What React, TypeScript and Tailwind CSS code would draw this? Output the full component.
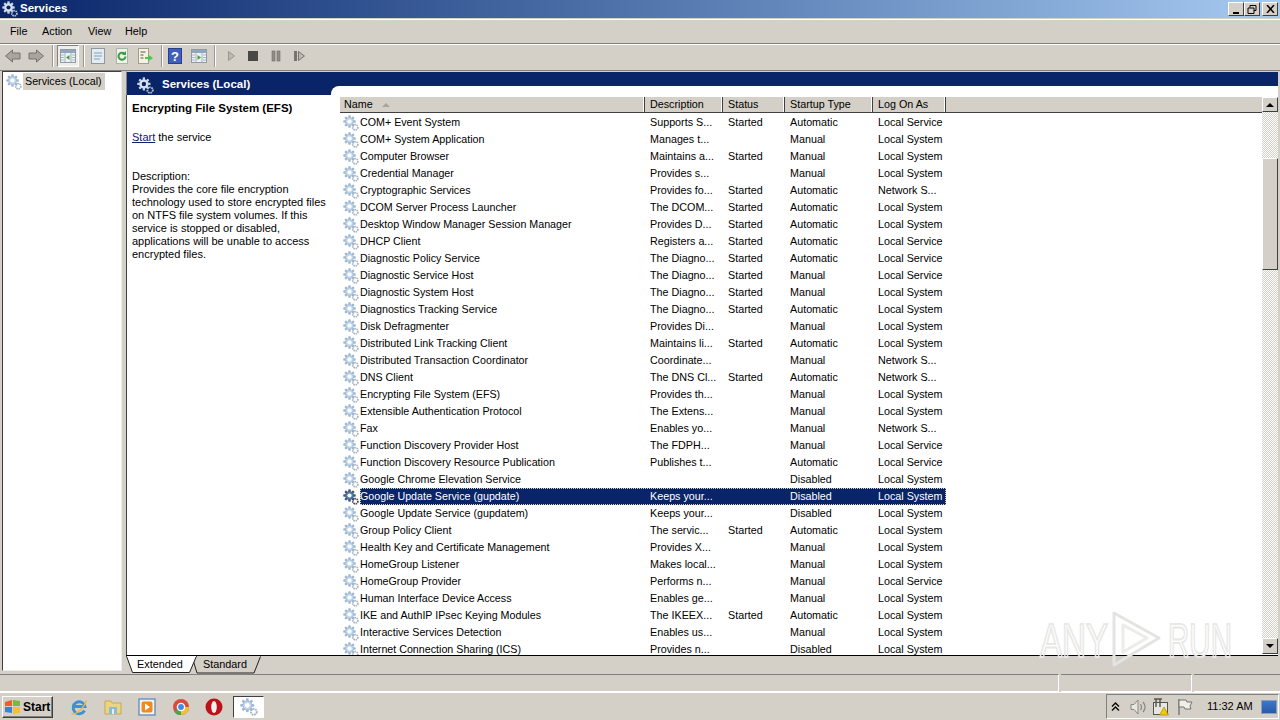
import React from 'react'

const rows: string[][] = [
  ['COM+ Event System', 'Supports S...', 'Started', 'Automatic', 'Local Service'],
  ['COM+ System Application', 'Manages t...', '', 'Manual', 'Local System'],
  ['Computer Browser', 'Maintains a...', 'Started', 'Manual', 'Local System'],
  ['Credential Manager', 'Provides s...', '', 'Manual', 'Local System'],
  ['Cryptographic Services', 'Provides fo...', 'Started', 'Automatic', 'Network S...'],
  ['DCOM Server Process Launcher', 'The DCOM...', 'Started', 'Automatic', 'Local System'],
  ['Desktop Window Manager Session Manager', 'Provides D...', 'Started', 'Automatic', 'Local System'],
  ['DHCP Client', 'Registers a...', 'Started', 'Automatic', 'Local Service'],
  ['Diagnostic Policy Service', 'The Diagno...', 'Started', 'Automatic', 'Local Service'],
  ['Diagnostic Service Host', 'The Diagno...', 'Started', 'Manual', 'Local Service'],
  ['Diagnostic System Host', 'The Diagno...', 'Started', 'Manual', 'Local System'],
  ['Diagnostics Tracking Service', 'The Diagno...', 'Started', 'Automatic', 'Local System'],
  ['Disk Defragmenter', 'Provides Di...', '', 'Manual', 'Local System'],
  ['Distributed Link Tracking Client', 'Maintains li...', 'Started', 'Automatic', 'Local System'],
  ['Distributed Transaction Coordinator', 'Coordinate...', '', 'Manual', 'Network S...'],
  ['DNS Client', 'The DNS Cl...', 'Started', 'Automatic', 'Network S...'],
  ['Encrypting File System (EFS)', 'Provides th...', '', 'Manual', 'Local System'],
  ['Extensible Authentication Protocol', 'The Extens...', '', 'Manual', 'Local System'],
  ['Fax', 'Enables yo...', '', 'Manual', 'Network S...'],
  ['Function Discovery Provider Host', 'The FDPH...', '', 'Manual', 'Local Service'],
  ['Function Discovery Resource Publication', 'Publishes t...', '', 'Automatic', 'Local Service'],
  ['Google Chrome Elevation Service', '', '', 'Disabled', 'Local System'],
  ['Google Update Service (gupdate)', 'Keeps your...', '', 'Disabled', 'Local System'],
  ['Google Update Service (gupdatem)', 'Keeps your...', '', 'Disabled', 'Local System'],
  ['Group Policy Client', 'The servic...', 'Started', 'Automatic', 'Local System'],
  ['Health Key and Certificate Management', 'Provides X...', '', 'Manual', 'Local System'],
  ['HomeGroup Listener', 'Makes local...', '', 'Manual', 'Local System'],
  ['HomeGroup Provider', 'Performs n...', '', 'Manual', 'Local Service'],
  ['Human Interface Device Access', 'Enables ge...', '', 'Manual', 'Local System'],
  ['IKE and AuthIP IPsec Keying Modules', 'The IKEEX...', 'Started', 'Automatic', 'Local System'],
  ['Interactive Services Detection', 'Enables us...', '', 'Manual', 'Local System'],
  ['Internet Connection Sharing (ICS)', 'Provides n...', '', 'Disabled', 'Local System'],
]

const raised = 'border border-t-white border-l-white border-r-[#404040] border-b-[#404040]'
const sunken = 'border border-t-[#808080] border-l-[#808080] border-r-white border-b-white'

function Gear({ size = 16, fill = '#c5d7ea', stroke = '#9db8d4', small = '#a4b2c0', hole = '#ffffff' }: { size?: number; fill?: string; stroke?: string; small?: string; hole?: string }) {
  const teeth = [0, 45, 90, 135, 180, 225, 270, 315]
  return (
    <svg width={size} height={size} viewBox="0 0 16 16" className="shrink-0">
      <g stroke={stroke} strokeWidth="2">
        {teeth.map(a => (
          <line key={a} x1="6.5" y1="0.5" x2="6.5" y2="12.5" transform={`rotate(${a} 6.5 6.5)`} />
        ))}
      </g>
      <circle cx="6.500" cy="6.500" r="4" fill={fill} stroke={stroke} strokeWidth="0.8" />
      <circle cx="6.500" cy="6.500" r="2.100" fill={hole} />
      <circle cx="12.300" cy="12.300" r="2.600" fill="none" stroke={small} strokeWidth="1.700" strokeDasharray="1.500 0.700" />
      <circle cx="12.300" cy="12.300" r="1" fill={hole} />
    </svg>
  )
}

function ToolIcon({ children, className = '' }: { children: React.ReactNode; className?: string }) {
  return (
    <svg width="20" height="20" viewBox="0 0 20 20" className={`shrink-0 ${className}`}>
      {children}
    </svg>
  )
}

function Sep({ className = '' }: { className?: string }) {
  return <div className={`w-[2px] h-[22px] border-l border-l-[#9a968e] border-r border-r-white shrink-0 ${className}`} />
}

function WindowIcon({ accent }: { accent: 'left' | 'right' }) {
  return (
    <ToolIcon>
      <rect x="2.500" y="3.500" width="15" height="13" fill="#eef3f2" stroke="#8f9ca8" />
      <rect x="3" y="4" width="14" height="3" fill="#8ea6c0" />
      <path d="M7 7v9M13 7v9" stroke="#9fb0bf" />
      <path d="M3 9h3M3 11.500h3M3 14h3M14 9h3M14 11.500h3M14 14h3" stroke="#a9b7c4" />
      {accent === 'left' ? (
        <path d="M11.500 9v5L8 11.500z" fill="#4f9a4f" />
      ) : (
        <path d="M8.500 9v5l3.500-2.500z" fill="#4f9a4f" />
      )}
    </ToolIcon>
  )
}

function Toolbar() {
  return (
    <div className="h-[26px] shrink-0 border-t border-t-white flex items-center pl-[3px] pb-[3px]">
      <ToolIcon>
        <path d="M2.500 10l7-6v3h7.500v6H9.500v3z" fill="#a8a59e" stroke="#75726c" />
      </ToolIcon>
      <ToolIcon className="ml-[3px]">
        <path d="M17.500 10l-7-6v3H3v6h7.500v3z" fill="#a8a59e" stroke="#75726c" />
      </ToolIcon>
      <Sep className="ml-[6px]" />
      <div className="ml-[3px] w-[22px] h-[22px] shrink-0 bg-[#efedea] border border-t-[#808080] border-l-[#808080] border-r-white border-b-white flex items-center justify-center">
        <WindowIcon accent="left" />
      </div>
      <Sep className="ml-[4px]" />
      <ToolIcon className="ml-[3px]">
        <rect x="3.500" y="2.500" width="13" height="15" fill="#e4ecf0" stroke="#8b9aa6" />
        <path d="M6 7h8M6 10h8M6 13h6" stroke="#7fa0c0" />
      </ToolIcon>
      <ToolIcon className="ml-[4px]">
        <rect x="4.500" y="2.500" width="11" height="15" fill="#eef4ea" stroke="#aab5a6" />
        <path d="M13.500 10.500a3.500 3.500 0 1 1-1.200-3" fill="none" stroke="#3a9a45" strokeWidth="2" />
        <path d="M14 5v4h-4z" fill="#3a9a45" />
      </ToolIcon>
      <ToolIcon className="ml-[3px]">
        <rect x="3.500" y="2.500" width="10" height="15" fill="#f5f2e4" stroke="#a39f8c" />
        <path d="M5.500 6h5M5.500 9h3M5.500 12h3" stroke="#555550" />
        <path d="M10 11h3V8.500l5 3.500-5 3.500V13h-3z" fill="#56bf52" />
      </ToolIcon>
      <Sep className="ml-[6px]" />
      <ToolIcon className="ml-[2px]">
        <rect x="3.500" y="2.500" width="13" height="15" fill="#3f5fbe" stroke="#283f8c" />
        <text x="10" y="15" textAnchor="middle" fontSize="13" fontWeight="700" fill="#fff" fontFamily="Liberation Sans, sans-serif">?</text>
      </ToolIcon>
      <div className="ml-[4px]"><WindowIcon accent="right" /></div>
      <Sep className="ml-[5px]" />
      <ToolIcon className="ml-[5px]">
        <path d="M7.500 5.500l6 4.500-6 4.500z" fill="#bdb9b1" stroke="#9a968e" />
      </ToolIcon>
      <ToolIcon className="ml-[2px]">
        <rect x="5" y="5" width="10" height="10" fill="#4a4844" />
      </ToolIcon>
      <ToolIcon className="ml-[3px]">
        <rect x="6" y="5" width="3" height="10" fill="#918e87" stroke="#6e6b65" strokeWidth="0.6" />
        <rect x="11" y="5" width="3" height="10" fill="#918e87" stroke="#6e6b65" strokeWidth="0.6" />
      </ToolIcon>
      <ToolIcon className="ml-[3px]">
        <rect x="5" y="5" width="3" height="10" fill="#77746e" />
        <path d="M9.500 5.500l6 4.500-6 4.500z" fill="#bdb9b1" stroke="#77746e" />
      </ToolIcon>
    </div>
  )
}

function Description() {
  return (
    <div className="w-[213px] shrink-0 pl-[5px] pr-[3px] pt-[6px] text-[11px] leading-[13px] text-black whitespace-nowrap">
      <div className="font-bold text-[11.5px] leading-[14px]">Encrypting File System (EFS)</div>
      <div className="mt-[16px]">
        <span className="text-[#0a246a] underline">Start</span> the service
      </div>
      <div className="mt-[26px]">Description:</div>
      <div>
        Provides the core file encryption
        <br />technology used to store encrypted files
        <br />on NTFS file system volumes. If this
        <br />service is stopped or disabled,
        <br />applications will be unable to access
        <br />encrypted files.
      </div>
    </div>
  )
}

function HeaderCell({ label, width, sort }: { label: string; width: string; sort?: boolean }) {
  return (
    <div className={`${width} h-[15px] shrink-0 flex items-center ${sort ? 'pl-[4px]' : 'pl-[5px]'} border-r border-r-[#404040] shadow-[inset_-1px_0_0_#fff]`}>
      {label}
      {sort && <span className="ml-[9px] w-0 h-0 border-l-[4px] border-r-[4px] border-b-[4px] border-l-transparent border-r-transparent border-b-[#a8a49c]" />}
    </div>
  )
}

function ServiceList() {
  return (
    <div className="flex-1 min-w-0 flex flex-col h-full pt-[2px]">
      <div className="h-[16px] shrink-0 flex bg-[#d4d0c8] border-b border-b-[#404040] text-[10.75px] text-black">
        <HeaderCell label="Name" width="w-[305px]" sort />
        <HeaderCell label="Description" width="w-[78px]" />
        <HeaderCell label="Status" width="w-[62px]" />
        <HeaderCell label="Startup Type" width="w-[88px]" />
        <HeaderCell label="Log On As" width="w-[73px]" />
      </div>
      <div className="flex-1 min-h-0 overflow-hidden pt-[1px]">
        {rows.map(r => {
          const selected = r[0] === 'Google Update Service (gupdate)'
          return (
            <div key={r[0]} className="h-[17px] flex items-center text-[10.75px] text-black whitespace-nowrap">
              <div className="w-[20px] shrink-0 pl-[3px]">
                {selected ? <Gear fill="#5b7aa8" stroke="#3c5a88" small="#444444" /> : <Gear />}
              </div>
              <div className={`w-[586px] h-[17px] flex items-center ${selected ? 'bg-[#0a246a] text-white outline-1 -outline-offset-1 outline-dotted outline-[#d4d0c8]' : ''}`}>
                <div className="w-[290px] text-[10.7px]">{r[0]}</div>
                <div className="w-[78px]">{r[1]}</div>
                <div className="w-[62px]">{r[2]}</div>
                <div className="w-[88px]">{r[3]}</div>
                <div className="w-[68px]">{r[4]}</div>
              </div>
            </div>
          )
        })}
      </div>
    </div>
  )
}

function Scrollbar() {
  return (
    <div className="w-[16px] shrink-0 h-full pt-[2px] flex flex-col">
      <div className={`h-[15px] shrink-0 bg-[#d4d0c8] ${raised} flex items-center justify-center`}>
        <span className="w-0 h-0 border-l-[4px] border-r-[4px] border-b-[4px] border-l-transparent border-r-transparent border-b-black" />
      </div>
      <div className="flex-1 min-h-0 flex flex-col bg-[repeating-conic-gradient(#d4d0c8_0_25%,#ffffff_0_50%)] bg-[length:2px_2px]">
        <div className={`h-[112px] mt-[46px] bg-[#d4d0c8] ${raised}`} />
      </div>
      <div className={`h-[16px] shrink-0 mb-[1px] bg-[#d4d0c8] ${raised} flex items-center justify-center`}>
        <span className="w-0 h-0 border-l-[4px] border-r-[4px] border-t-[4px] border-l-transparent border-r-transparent border-t-black" />
      </div>
    </div>
  )
}

function Tabs() {
  return (
    <div className="h-[19px] shrink-0 relative -ml-[1px] bg-[#d4d0c8] border-t border-t-black text-[10.85px] text-black">
      <svg width="140" height="18" viewBox="0 0 140 18" className="absolute left-0 top-0">
        <path d="M66 0.500L71 17H128L134.500 0.500" fill="#d4d0c8" stroke="#222222" />
        <path d="M0.500 0L6.500 16.500H63.500L70.500 0" fill="#ffffff" stroke="#222222" />
        <path d="M1 0H70" stroke="#ffffff" strokeWidth="2" />
      </svg>
      <span className="absolute left-[11px] top-0 leading-[17px]">Extended</span>
      <span className="absolute left-[77px] top-0 leading-[17px]">Standard</span>
    </div>
  )
}

function Watermark() {
  return (
    <div className="absolute left-[1040px] top-[610px] h-[58px] flex items-start pointer-events-none [font-family:'Liberation_Sans',sans-serif] text-[48px] leading-none text-transparent [-webkit-text-stroke:2px_#e8e8e6]">
      <span className="block w-[68px] mt-[7px] scale-x-[0.69] origin-left">ANY</span>
      <svg width="55" height="58" viewBox="0 0 55 58" className="shrink-0">
        <path d="M6 3v52l45-27z" fill="none" stroke="#e4e4e2" strokeWidth="3" strokeLinejoin="round" />
        <path d="M15 15v27l24-14z" fill="none" stroke="#ececea" strokeWidth="3" strokeLinejoin="round" />
      </svg>
      <span className="block w-[64px] ml-[5px] mt-[7px] scale-x-[0.615] origin-left">RUN</span>
    </div>
  )
}

function Taskbar() {
  return (
    <div className="h-[28px] shrink-0 flex items-center relative bg-[#d4d0c8] border-t border-t-white">
      <div className={`ml-[2px] w-[51px] h-[22px] ${raised} shadow-[inset_-1px_-1px_0_#808080] flex items-center pl-[1px] gap-[1px] font-bold text-[12px] text-black`}>
        <svg width="18" height="16" viewBox="0 0 18 16">
          <path d="M1 3l7-2v6H1z" fill="#e8622a" />
          <path d="M9 1l7 1v5H9z" fill="#7cb83a" />
          <path d="M1 8h7v6l-7-1z" fill="#3a82d8" />
          <path d="M9 8h7v6l-7 1z" fill="#f4c02e" />
        </svg>
        Start
      </div>
      {/* quick launch */}
      <svg width="18" height="18" viewBox="0 0 18 18" className="ml-[17px]">
        <path d="M14.500 12.500A6 6 0 1 1 15 8.500H4.500" fill="none" stroke="#3c8fd8" strokeWidth="2.800" />
        <path d="M1.500 15.500c3 2 11-3 15-13" fill="none" stroke="#e8b83a" strokeWidth="1.400" />
      </svg>
      <svg width="18" height="18" viewBox="0 0 18 18" className="ml-[16px]">
        <path d="M1 5V3h6l1 2h9v11H1z" fill="#eed47e" stroke="#c7a94f" />
        <rect x="5" y="9" width="8" height="7" fill="#86bcd8" />
        <rect x="8" y="11" width="2" height="5" fill="#e8eef2" />
      </svg>
      <svg width="18" height="18" viewBox="0 0 18 18" className="ml-[16px]">
        <rect x="1" y="1" width="16" height="16" fill="#f0f4f8" stroke="#6f95c4" strokeWidth="1.500" />
        <rect x="3.500" y="3.500" width="11" height="11" rx="2" fill="#ef8a1e" />
        <path d="M7 5.500l5 3.500-5 3.500z" fill="#ffffff" />
      </svg>
      <svg width="18" height="18" viewBox="0 0 18 18" className="ml-[16px]">
        <circle cx="9" cy="9" r="8" fill="#d94c3d" />
        <path d="M9 9L2 13.500A8 8 0 0 0 9 17z" fill="#4aa552" />
        <path d="M9 9l8 0A8 8 0 0 1 9 17z" fill="#f2c230" />
        <circle cx="9" cy="9" r="3.600" fill="#4a86e8" stroke="#ffffff" strokeWidth="1.400" />
      </svg>
      <svg width="18" height="18" viewBox="0 0 18 18" className="ml-[15px]">
        <circle cx="9" cy="9" r="8.500" fill="#bd1219" />
        <ellipse cx="9" cy="9" rx="2.800" ry="6" fill="#f4f0ee" />
      </svg>
      <div className="ml-[10px] w-[31px] h-[22px] bg-white border border-t-[#404040] border-l-[#404040] border-r-white border-b-white flex items-center justify-center">
        <Gear size={18} />
      </div>
      <div className={`absolute right-[1px] top-[1px] w-[173px] h-[25px] ${sunken} flex items-center text-black`}>
        <svg width="9" height="10" viewBox="0 0 9 10" className="ml-[4px] shrink-0">
          <path d="M1 4.500l3.500-3.500L8 4.500M1 8.500L4.500 5 8 8.500" fill="none" stroke="#111111" strokeWidth="1.500" />
        </svg>
        <svg width="18" height="18" viewBox="0 0 18 18" className="ml-[9px] shrink-0">
          <path d="M2 6.500h3l4-4.500v14l-4-4.500H2z" fill="#e8e6e0" stroke="#8a877f" />
          <path d="M11.500 6c1.300 2 1.300 4 0 6M14 4c2.500 3 2.500 7 0 10" fill="none" stroke="#8a877f" strokeWidth="1.200" />
        </svg>
        <svg width="18" height="18" viewBox="0 0 18 18" className="ml-[5px] shrink-0">
          <rect x="1.500" y="4.500" width="14" height="12" fill="#e8e6e0" stroke="#555550" />
          <path d="M4 1v8M8 1v8M2 1h8" fill="none" stroke="#555550" strokeWidth="1.400" />
          <path d="M12 9l4.500 8h-9z" fill="#f4c800" stroke="#8a7000" strokeWidth="0.500" />
        </svg>
        <svg width="18" height="18" viewBox="0 0 18 18" className="ml-[6px] shrink-0">
          <path d="M3 1v16" stroke="#77746e" strokeWidth="1.400" />
          <path d="M3 2h7l1 2h5l-2 4 1 3H9l-1-2H3z" fill="#efeee8" stroke="#77746e" />
        </svg>
        <span className="ml-[13px] w-[47px] shrink-0 text-[11px] whitespace-nowrap">11:32 AM</span>
        <div className="ml-[7px] w-[16px] h-[14px] shrink-0 bg-gradient-to-b from-[#3b78c8] to-[#2a5ba8] border border-[#8aa0bc]" />
      </div>
    </div>
  )
}

export default function App() {
  return (
    <div className="w-[1280px] h-[720px] flex flex-col overflow-hidden relative bg-[#d4d0c8] [font-family:'Liberation_Sans',sans-serif] text-[11px]">
      <div className="h-[18px] shrink-0 flex items-center bg-gradient-to-r from-[#0a246a] to-[#a6caf0] pl-[2px] pr-[2px]">
        <Gear size={16} fill="#dfe8f2" stroke="#c3d0e0" small="#b8c4d0" hole="#0a246a" />
        <span className="ml-[2px] font-bold text-[11.5px] text-white">Services</span>
        <div className="ml-auto flex">
          <div className={`w-[16px] h-[14px] bg-[#d4d0c8] ${raised} flex items-center justify-center`}>
            <span className="w-[6px] h-[2px] bg-black mt-[7px]" />
          </div>
          <div className={`w-[16px] h-[14px] bg-[#d4d0c8] ${raised} flex items-center justify-center`}>
            <svg width="10" height="9" viewBox="0 0 10 9">
              <path d="M3 .5h6v5H7M3 .5v2M1 3h6v5.500H1z" fill="none" stroke="#000000" />
            </svg>
          </div>
          <div className={`ml-[2px] w-[16px] h-[14px] bg-[#d4d0c8] ${raised} flex items-center justify-center`}>
            <svg width="9" height="8" viewBox="0 0 9 8">
              <path d="M1 0l7 8M8 0L1 8" stroke="#000000" strokeWidth="1.500" />
            </svg>
          </div>
        </div>
      </div>
      <div className="h-[26px] shrink-0 pt-[1px]">
        <div className="h-[25px] border-t border-t-white border-b border-b-[#808080] flex items-center pl-[10px] text-[10.85px] text-black">
          <span className="w-[32px]">File</span>
          <span className="w-[46px]">Action</span>
          <span className="w-[37px]">View</span>
          <span>Help</span>
        </div>
      </div>
      <Toolbar />
      <div className="flex-1 min-h-0 flex border-t border-t-[#808080]">
        <div className="w-[120px] shrink-0 ml-[2px] bg-white border border-t-[#404040] border-l-[#404040] border-r-[#efedea] border-b-[#efedea] pt-[1px] h-[600px]">
          <div className="flex items-center h-[17px] text-[10.7px] text-black pl-[3px]">
            <Gear />
            <span className="ml-[1px] bg-[#d4d0c8] pl-[2px] pr-[3px]">Services (Local)</span>
          </div>
        </div>
        <div className="ml-[4px] mr-[2px] flex-1 min-w-0 flex flex-col">
          <div className="h-[24px] bg-[#0a246a] shrink-0 flex items-center pl-[10px] pt-[3px] border-t border-t-[#d4d0c8] border-l border-l-[#808080] relative">
            <Gear size={17} fill="#dfe8f2" stroke="#c3d0e0" small="#b8c4d0" hole="#0a246a" />
            <span className="ml-[8px] font-bold text-[11.5px] text-white">Services (Local)</span>
            <div className="absolute left-[204px] top-[14px] right-0 h-[9px] bg-white rounded-tl-[8px]" />
          </div>
          <div className="flex-1 min-h-0 bg-white flex flex-col border-l border-l-[#404040]">
            <div className="flex-1 min-h-0 flex">
              <Description />
              <ServiceList />
              <Scrollbar />
            </div>
            <Tabs />
          </div>
        </div>
      </div>
      <div className="h-[18px] shrink-0 flex">
        <div className="flex-1 border-t border-t-[#808080] border-r border-r-white border-b border-b-white" />
        <div className="w-[131px] ml-[2px] border-t border-t-[#808080] border-r border-r-white border-b border-b-white" />
        <div className="w-[86px] ml-[2px] border-t border-t-[#808080] border-b border-b-white" />
      </div>
      <Taskbar />
      <Watermark />
    </div>
  )
}
